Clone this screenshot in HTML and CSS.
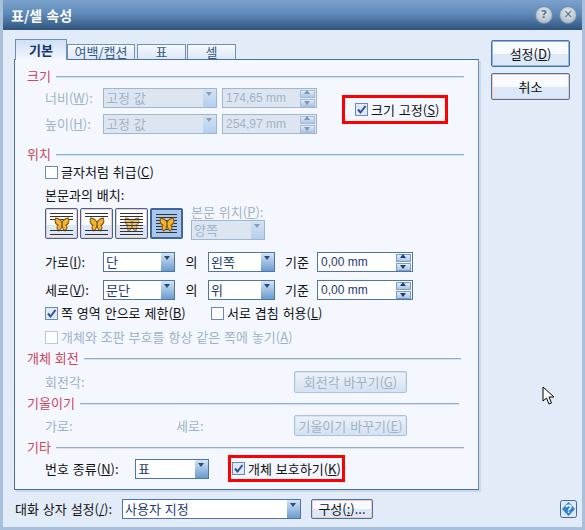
FILE: index.html
```html
<!doctype html>
<html>
 <head>
  <title>표/셀 속성</title>
  <link rel="stylesheet" href="styles.css">
 </head>
 <body>
  <svg class="defs" width="0" height="0">
   <symbol id="fly" viewBox="0 0 20 18">
    <path d="M10 6 C8 3 5 1 2 1 C1 5 2 9 5 10 C3 12 4 16 6 17 C8 16 9 14 10 11 C11 14 12 16 14 17 C16 16 17 12 15 10 C18 9 19 5 18 1 C15 1 12 3 10 6 Z" fill="#f0b52c" stroke="#8a5a1c" stroke-width="1.4"/>
    <path d="M10 6 V12" stroke="#7a4a18" stroke-width="1.4"/>
   </symbol>
  </svg>

  <div class="window">
   <div class="titlebar">
    <span class="title">표/셀 속성</span>
    <span class="title-btns">
     <span class="round-btn">?</span>
     <span class="round-btn">✕</span>
    </span>
   </div>

   <div class="content">
    <div class="main">
     <div class="tabs">
      <span class="tab active">기본</span>
      <span class="tab t-margin">여백/캡션</span>
      <span class="tab t-small">표</span>
      <span class="tab t-small">셀</span>
     </div>

     <div class="panel">
      <div class="heading first"><span>크기</span><i></i></div>
      <div class="size-body">
       <div>
        <div class="row">
         <span class="lbl lbl-58 off">너비(<u>W</u>):</span>
         <span class="combo off w-114"><span class="val">고정 값</span><span class="arrow"></span></span>
         <span class="spin off w-95 ml-5"><span class="val num">174,65 mm</span><span class="spin-btns"><b class="up"></b><b class="down"></b></span></span>
        </div>
        <div class="row mt-6">
         <span class="lbl lbl-58 off">높이(<u>H</u>):</span>
         <span class="combo off w-114"><span class="val">고정 값</span><span class="arrow"></span></span>
         <span class="spin off w-95 ml-5"><span class="val num">254,97 mm</span><span class="spin-btns"><b class="up"></b><b class="down"></b></span></span>
        </div>
       </div>
       <div class="flag flag-size">
        <span class="check on"><svg viewBox="0 0 11 11"><path d="M2 5.5 L4.5 8.5 L9.5 2" fill="none" stroke="#2b4f9f" stroke-width="2"/></svg></span>
        <span>크기 고정(<u>S</u>)</span>
       </div>
      </div>

      <div class="heading mt-12"><span>위치</span><i></i></div>
      <div class="row line mt-2">
       <span class="check"></span><span>글자처럼 취급(<u>C</u>)</span>
      </div>
      <div class="row line mt-7"><span>본문과의 배치:</span></div>
      <div class="row wrap-row">
       <span class="wrap-btn"><span class="ln top"></span><svg class="fly"><use href="#fly"/></svg><span class="ln bot"></span></span>
       <span class="wrap-btn two"><span class="ln top"></span><svg class="fly"><use href="#fly"/></svg><span class="ln bot"></span></span>
       <span class="wrap-btn three"><svg class="fly dim"><use href="#fly"/></svg><span class="ln full"></span></span>
       <span class="wrap-btn four"><span class="ln full"></span><svg class="fly"><use href="#fly"/></svg></span>
       <div class="wrap-pos">
        <span class="line off">본문 위치(<u>P</u>):</span>
        <span class="combo off w-74"><span class="val">양쪽</span><span class="arrow"></span></span>
       </div>
      </div>

      <div class="row mt-12">
       <span class="lbl lbl-58">가로(<u>I</u>):</span>
       <span class="combo w-72"><span class="val">단</span><span class="arrow"></span></span>
       <span class="of">의</span>
       <span class="combo w-67"><span class="val">왼쪽</span><span class="arrow"></span></span>
       <span class="base">기준</span>
       <span class="spin w-96"><span class="val num">0,00 mm</span><span class="spin-btns"><b class="up"></b><b class="down"></b></span></span>
      </div>
      <div class="row mt-8">
       <span class="lbl lbl-58">세로(<u>V</u>):</span>
       <span class="combo w-72"><span class="val">문단</span><span class="arrow"></span></span>
       <span class="of">의</span>
       <span class="combo w-67"><span class="val">위</span><span class="arrow"></span></span>
       <span class="base">기준</span>
       <span class="spin w-96"><span class="val num">0,00 mm</span><span class="spin-btns"><b class="up"></b><b class="down"></b></span></span>
      </div>

      <div class="row line mt-5">
       <span class="check on"><svg viewBox="0 0 11 11"><path d="M2 5.5 L4.5 8.5 L9.5 2" fill="none" stroke="#2b4f9f" stroke-width="2"/></svg></span>
       <span class="limit">쪽 영역 안으로 제한(<u>B</u>)</span>
       <span class="check"></span><span>서로 겹침 허용(<u>L</u>)</span>
      </div>
      <div class="row line mt-8 off">
       <span class="check off"></span><span>개체와 조판 부호를 항상 같은 쪽에 놓기(<u>A</u>)</span>
      </div>

      <div class="heading mt-5 end-461"><span>개체 회전</span><i></i></div>
      <div class="row mt-5 btn-row">
       <span class="off">회전각:</span>
       <span class="btn off push">회전각 바꾸기(<u>G</u>)</span>
      </div>
      <div class="heading mt-2 end-459"><span>기울이기</span><i></i></div>
      <div class="row mt-4 btn-row short">
       <span class="off lbl-131">가로:</span>
       <span class="off">세로:</span>
       <span class="btn off push">기울이기 바꾸기(<u>E</u>)</span>
      </div>
      <div class="heading mt-3"><span>기타</span><i></i></div>
      <div class="row mt-4">
       <span class="lbl lbl-90">번호 종류(<u>N</u>):</span>
       <span class="combo w-74"><span class="val">표</span><span class="arrow"></span></span>
       <div class="flag flag-protect">
        <span class="check on"><svg viewBox="0 0 11 11"><path d="M2 5.5 L4.5 8.5 L9.5 2" fill="none" stroke="#2b4f9f" stroke-width="2"/></svg></span>
        <span>개체 보호하기(<u>K</u>)</span>
       </div>
      </div>
     </div>
    </div>

    <div class="side">
     <span class="btn big default">설정(<u>D</u>)</span>
     <span class="btn big">취소</span>
    </div>
   </div>

   <div class="footer">
    <span class="foot-lbl">대화 상자 설정(<u>/</u>):</span>
    <span class="combo w-179"><span class="val">사용자 지정</span><span class="arrow"></span></span>
    <span class="btn config">구성(<u>:</u>)...</span>
    <span class="help">
     <svg viewBox="0 0 17 18" width="17" height="18">
      <rect x="0.5" y="0.5" width="16" height="17" rx="2" fill="#dfe9f6" stroke="#45689a"/>
      <path d="M8.5 2 L15 9 L8.5 16 L2 9 Z" fill="#2f7fd6"/>
      <path d="M6.3 7.2 C6.5 4.8 10.8 4.8 10.8 7.2 C10.8 8.8 8.6 8.8 8.6 10.4 M8.6 11.6 V13" fill="none" stroke="#fff" stroke-width="1.6"/>
     </svg>
    </span>
   </div>

   <svg class="cursor" viewBox="0 0 14 20" width="14" height="20">
    <path d="M1 1 L1 15 L4.5 12 L7 18 L9.5 17 L7 11 L12 11 Z" fill="#fff" stroke="#000"/>
   </svg>
  </div>
 </body>
</html>
```

FILE: styles.css
```css
* {
  box-sizing: border-box;
}

body {
  margin: 0;
  background-color: #e2ebf8;
  font-family: "Noto Sans CJK KR", "Liberation Sans", sans-serif;
  font-size: 13px;
  line-height: 16px;
  word-spacing: 1px;
  color: #111;
}

.defs {
  position: absolute;
}

.window {
  position: relative;
  width: 585px;
  height: 530px;
  overflow: hidden;
  background-color: #e2ebf8;
  border-left: 3px solid #a9c0dd;
  border-right: 3px solid #a9c0dd;
  border-bottom: 3px solid #a9c0dd;
}

.titlebar {
  display: flex;
  align-items: center;
  justify-content: space-between;
  height: 30px;
  margin: 0 -3px;
  padding: 0 8px 0 11px;
  background: linear-gradient(#7ba2cc, #5f8ab9 45%, #30557e);
}

.title {
  color: #fff;
  font-size: 14px;
  font-weight: bold;
}

.title-btns {
  display: flex;
  gap: 6px;
}

.round-btn {
  display: flex;
  align-items: center;
  justify-content: center;
  width: 18px;
  height: 18px;
  border-radius: 50%;
  background: radial-gradient(circle at 50% 35%, #e6eaee, #a3afbc);
  border: 1px solid #6f8cab;
  color: #55739a;
  font-family: "DejaVu Sans", sans-serif;
  font-size: 11px;
  font-weight: bold;
}

.content {
  display: flex;
  padding: 9px 0 0 11px;
}

.main {
  width: 465px;
}

.side {
  display: flex;
  flex-direction: column;
  gap: 6px;
  width: 79px;
  margin-left: 12px;
  margin-top: 1px;
}

/* tabs */
.tabs {
  position: relative;
  display: flex;
  align-items: flex-end;
  height: 21px;
  margin-bottom: -1px;
  margin-left: 1px;
}

.tab {
  display: flex;
  align-items: center;
  justify-content: center;
  height: 16px;
  border: 1px solid #6f8fb5;
  border-bottom-color: #4d6f9c;
  background: linear-gradient(#f6f9fe, #dde8f6);
  color: #355a88;
}

.tab.active {
  width: 52px;
  height: 21px;
  border-bottom: 0;
  background: linear-gradient(#cfe0f6, #f4f7fe);
  color: #12336b;
  font-weight: bold;
}

.t-margin {
  width: 68px;
  margin-right: 2px;
}

.t-small {
  width: 49px;
  margin-right: 1px;
}

/* panel */
.panel {
  height: 431px;
  padding: 0 14px 0 12px;
  background-color: #f4f7fe;
  border: 1px solid #4d6f9c;
  border-right: 1px solid #6f8fb5;
  box-shadow: 2px 2px 0 #c9d8ec;
}

.heading {
  display: flex;
  align-items: center;
  gap: 5px;
  height: 16px;
  color: #c8455c;
}

.heading i {
  flex: 1;
  height: 1px;
  background-color: #8fb0d6;
  box-shadow: 0 1px 0 #d3e0f0;
}

.heading.first {
  margin-top: 8px;
}

.end-461 {
  margin-right: 3px;
}

.end-459 {
  margin-right: 5px;
}

.row {
  display: flex;
  align-items: center;
  height: 20px;
  padding-left: 18px;
}

.line {
  height: 16px;
}

.mt-2 { margin-top: 2px; }
.mt-3 { margin-top: 3px; }
.mt-4 { margin-top: 4px; }
.mt-5 { margin-top: 5px; }
.mt-6 { margin-top: 6px; }
.mt-7 { margin-top: 7px; }
.mt-8 { margin-top: 8px; }
.mt-12 { margin-top: 12px; }
.ml-5 { margin-left: 5px; }

.off {
  color: #a0b2c8;
}

.lbl-58 { width: 58px; }
.lbl-90 { width: 90px; }
.lbl-131 { width: 131px; }

.size-body {
  display: flex;
  margin-top: 4px;
}

.flag {
  display: flex;
  align-items: center;
  border: 3px solid #f00;
  color: #111;
}

.flag-size {
  width: 106px;
  height: 29px;
  margin: 7px 0 0 25px;
  padding-left: 10px;
}

.flag-protect {
  width: 117px;
  height: 27px;
  margin: -4px 0 -3px 19px;
  padding-left: 1px;
}

.check {
  flex: none;
  width: 13px;
  height: 13px;
  margin-right: 3px;
  border: 1px solid #6a8ab2;
  background-color: #fff;
}

.check.on {
  background-color: #e1e9f5;
}

.check.off {
  border-color: #b8c8dc;
}

.check svg {
  display: block;
  width: 11px;
  height: 11px;
}

.limit {
  width: 150px;
}

/* combo and spin fields */
.combo,
.spin {
  display: flex;
  flex: none;
  height: 20px;
  border: 1px solid #4d76a8;
  background-color: #fff;
  color: #1c3a70;
}

.combo.off,
.spin.off {
  border-color: #9db6d2;
  background-color: #dde6f0;
  color: #a0b2c8;
}

.val {
  flex: 1;
  padding-left: 2px;
  line-height: 18px;
  white-space: nowrap;
}

.val.num {
  padding-left: 3px;
  font-family: "Liberation Sans", sans-serif;
  font-size: 12px;
  word-spacing: 0;
}

.arrow {
  position: relative;
  width: 13px;
  background: linear-gradient(#d5e4f5, #6a9bd0);
}

.arrow::after {
  content: "";
  position: absolute;
  top: 3px;
  left: 3px;
  border: 3.5px solid transparent;
  border-top: 4px solid #2c4a78;
  border-bottom: 0;
}

.combo.off .arrow {
  background: linear-gradient(#d4e2f2, #b4cfee);
}

.combo.off .arrow::after {
  border-top-color: #8a9db5;
}

.spin-btns {
  display: flex;
  flex-direction: column;
  justify-content: center;
  gap: 1px;
  width: 15px;
  margin-right: 1px;
}

.spin-btns b {
  position: relative;
  display: block;
  height: 8px;
  border: 1px solid #7c9cc4;
  background: linear-gradient(#e3edf8, #a8c5e6);
}

.spin.off .spin-btns b {
  border-color: #a9bfd8;
}

.spin-btns b::after {
  content: "";
  position: absolute;
  left: 3px;
  border: 3px solid transparent;
}

.spin-btns .up::after {
  top: -1px;
  border-bottom: 4px solid #223e6c;
  border-top: 0;
}

.spin-btns .down::after {
  top: 1px;
  border-top: 4px solid #223e6c;
  border-bottom: 0;
}

.spin.off .spin-btns .up::after {
  border-bottom-color: #7f93ad;
}

.spin.off .spin-btns .down::after {
  border-top-color: #7f93ad;
}

.w-67 { width: 67px; }
.w-72 { width: 72px; }
.w-74 { width: 74px; }
.w-95 { width: 95px; }
.w-96 { width: 96px; }
.w-114 { width: 114px; }
.w-179 { width: 179px; }

.of {
  width: 33px;
  text-align: center;
}

.base {
  width: 42px;
  padding-left: 10px;
}

/* text wrap buttons */
.wrap-row {
  align-items: flex-start;
  height: 32px;
  margin-top: 5px;
  gap: 2px;
}

.wrap-btn {
  position: relative;
  flex: none;
  width: 33px;
  height: 31px;
  border: 1px solid #3f6698;
  border-radius: 2px;
  box-shadow: inset 0 0 0 1px #f0c8c8;
  background: linear-gradient(#fff 55%, #dce8f7 55%);
  overflow: hidden;
}

.wrap-btn.four {
  border: 2px solid #3f6698;
  box-shadow: none;
  background: #a9c6ec;
}

.ln {
  position: absolute;
  left: 4px;
  right: 4px;
}

.ln.top {
  top: 4px;
  height: 7px;
  background: repeating-linear-gradient(#333 0 1px, transparent 1px 3px);
}

.ln.bot {
  bottom: 3px;
  height: 5px;
  background: repeating-linear-gradient(#333 0 1px, transparent 1px 4px);
}

.wrap-btn.two .ln.top {
  height: 4px;
}

.ln.full {
  top: 4px;
  bottom: 3px;
  background: repeating-linear-gradient(#333 0 1px, transparent 1px 3px);
}

.fly {
  position: absolute;
  top: 8px;
  left: 8px;
  width: 16px;
  height: 15px;
}

.wrap-btn.four .fly {
  top: 7px;
  left: 7px;
}

.fly.dim {
  opacity: 0.75;
}

.wrap-pos {
  display: flex;
  flex-direction: column;
  margin: -4px 0 0 6px;
}

/* push buttons */
.btn {
  display: flex;
  align-items: center;
  justify-content: center;
  border: 1px solid #4a72a4;
  border-radius: 2px;
  box-shadow: inset 0 0 0 1px #f3c9c6;
  background: linear-gradient(#f7fafe 50%, #dce8f8 50%);
  white-space: nowrap;
}

.btn.big {
  height: 27px;
}

.btn.default {
  box-shadow: inset 0 0 0 1px #8fb4e0;
}

.btn.off {
  width: 113px;
  border-color: #a9c1de;
  box-shadow: inset 0 0 0 1px #d8e3f1;
  background: linear-gradient(#eef3fa, #d5e1f0);
  color: #a0b2c8;
}

.btn-row {
  height: 22px;
}

.btn-row.short {
  height: 21px;
}

.push {
  margin-left: auto;
  margin-right: 57px;
  height: 100%;
}

/* bottom row */
.footer {
  display: flex;
  align-items: center;
  height: 21px;
  margin-top: 8px;
  margin-left: 12px;
}

.foot-lbl {
  width: 107px;
}

.btn.config {
  width: 62px;
  height: 20px;
  margin-left: 10px;
}

.help {
  display: flex;
  margin-left: auto;
  margin-right: 5px;
}

.cursor {
  position: absolute;
  top: 386px;
  left: 539px;
}
```
